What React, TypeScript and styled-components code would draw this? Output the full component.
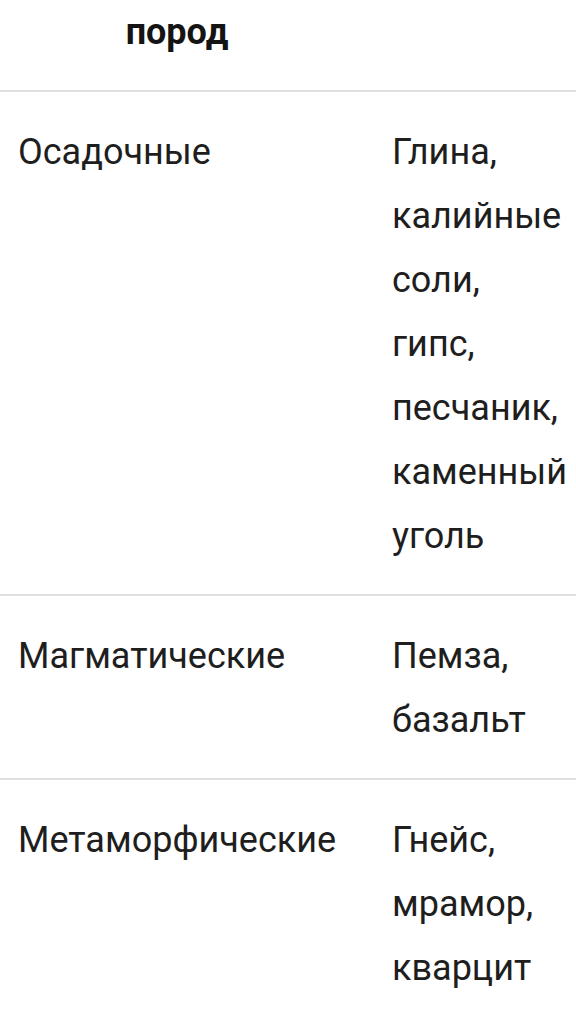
import styled, { createGlobalStyle } from "styled-components";

const GlobalStyle = createGlobalStyle`
  body {
    margin: 0;
    background: #ffffff;
    font-family: Roboto, "Noto Sans", sans-serif;
  }
`;

interface RowData {
  kind: string;
  examples: string[];
}

const rows: RowData[] = [
  {
    kind: "Осадочные",
    examples: ["Глина,", "калийные", "соли,", "гипс,", "песчаник,", "каменный", "уголь"],
  },
  { kind: "Магматические", examples: ["Пемза,", "базальт"] },
  { kind: "Метаморфические", examples: ["Гнейс,", "мрамор,", "кварцит"] },
];

export default function App() {
  return (
    <>
      <GlobalStyle />
      <Table>
        <colgroup>
          <col style={{ width: 374 }} />
          <col />
        </colgroup>
        <thead>
          <tr>
            <HeadCell>пород</HeadCell>
            <HeadCell />
          </tr>
        </thead>
        <tbody>
          {rows.map((row) => (
            <tr key={row.kind}>
              <Cell>{row.kind}</Cell>
              <Cell>
                {row.examples.map((word) => (
                  <Line key={word}>{word}</Line>
                ))}
              </Cell>
            </tr>
          ))}
        </tbody>
      </Table>
    </>
  );
}

const Table = styled.table`
  width: 576px;
  border-collapse: collapse;
  table-layout: fixed;
  color: #1e1e1e;
  font-size: 36px;
  line-height: 64px;

  tbody tr td {
    border-top: 2px solid #dde1e3;
  }
`;

const HeadCell = styled.th`
  padding: 0 20px 26px 0;
  text-align: center;
  font-weight: 700;
  color: #141414;
`;

const Cell = styled.td`
  padding: 28px 0 26px 18px;
  vertical-align: top;
  text-align: left;
  white-space: nowrap;
`;

const Line = styled.div`
  display: block;
`;
